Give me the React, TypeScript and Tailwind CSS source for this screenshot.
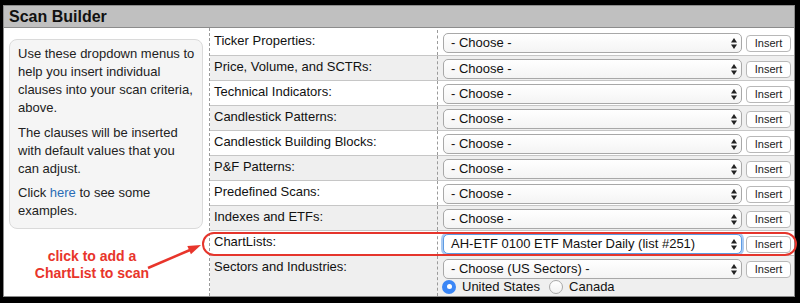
import React from "react";

const rows = [
  "Ticker Properties:",
  "Price, Volume, and SCTRs:",
  "Technical Indicators:",
  "Candlestick Patterns:",
  "Candlestick Building Blocks:",
  "P&F Patterns:",
  "Predefined Scans:",
  "Indexes and ETFs:",
  "ChartLists:",
  "Sectors and Industries:",
];

function Arrows() {
  return (
    <svg width="6" height="11" viewBox="0 0 6 11" className="shrink-0">
      <path d="M0 4.5 L3 0 L6 4.5 Z" fill="#222" />
      <path d="M0 6.5 L3 11 L6 6.5 Z" fill="#222" />
    </svg>
  );
}

function Select({ text, focus }: { text: string; focus?: boolean }) {
  return (
    <div
      className={
        focus
          ? "w-[299px] h-[20px] rounded-[5px] border border-[#5d9be3] shadow-[0_0_0_2px_#a9caf2] bg-white flex items-center pl-[7px] pr-[4px]"
          : "w-[299px] h-[20px] rounded-[5px] border border-[#a8a8a8] bg-gradient-to-b from-white to-[#f4f4f4] flex items-center pl-[7px] pr-[4px]"
      }
    >
      <span className="flex-1 text-[13px] leading-[16px] text-[#111] whitespace-nowrap">{text}</span>
      <Arrows />
    </div>
  );
}

function InsertBtn() {
  return (
    <div className="w-[45px] h-[17px] ml-[4px] rounded-[4px] border border-[#b8b8b8] bg-white flex items-center justify-center text-[11px] text-[#222]">
      Insert
    </div>
  );
}

function Radio({ checked, label }: { checked?: boolean; label: string }) {
  return (
    <div className="flex items-center">
      {checked ? (
        <div className="w-[14px] h-[14px] rounded-full bg-[#3a86f6] flex items-center justify-center">
          <div className="w-[5px] h-[5px] rounded-full bg-white" />
        </div>
      ) : (
        <div className="w-[14px] h-[14px] rounded-full border border-[#a9a9a9] bg-gradient-to-b from-white to-[#f2f2f2]" />
      )}
      <span className="ml-[6px] text-[13px] leading-[15px] text-[#111]">{label}</span>
    </div>
  );
}

export default function App() {
  return (
    <div className="relative w-[800px] h-[303px] bg-black pt-[5px] pl-[3px] pr-[5px] pb-[6px] font-['Liberation_Sans',Arial,sans-serif]">
      <div className="h-full border border-[#8c8c8c] bg-white flex flex-col">
        <div className="h-[22px] shrink-0 bg-[#c0c0c0] border-b border-[#8c8c8c] pl-[5px] text-[16px] font-bold leading-[21px] text-[#111]">
          Scan Builder
        </div>
        <div className="flex flex-1">
          {/* left help column */}
          <div className="w-[205px] shrink-0 pt-[11px] pl-[5px]">
            <div className="w-[194px] rounded-[8px] border border-[#dadada] bg-[#f5f5f5] pt-[5px] pb-[8px] pl-[8px] pr-[4px] text-[13px] leading-[18px] text-[#222] whitespace-nowrap">
              <p>
                Use these dropdown menus to<br />help you insert individual<br />clauses into your scan criteria,<br />above.
              </p>
              <p className="mt-[7px]">
                The clauses will be inserted<br />with default values that you<br />can adjust.
              </p>
              <p className="mt-[6px]">
                Click <span className="text-[#2a6cb5]">here</span> to see some<br />examples.
              </p>
            </div>
            <div className="w-[166px] mt-[19px] text-center text-[14px] leading-[17px] font-bold text-[#e8352b]">
              click to add a<br />ChartList to scan
            </div>
          </div>

          {/* criteria table */}
          <div className="flex-1 flex flex-col border-l border-dashed border-[#9a9a9a]">
            {rows.map((label, i) => {
              const gray = i % 2 === 1;
              const first = i === 0;
              const last = i === rows.length - 1;
              return (
                <div
                  key={label}
                  className={
                    (gray ? "bg-[#efefef] " : "bg-white ") +
                    (first ? "h-[27px] pt-[2px] " : "border-t border-[#c6c6c6] ") +
                    (last ? "flex-1 " : first ? "" : "h-[25px] ") +
                    "flex shrink-0"
                  }
                >
                  <div className="w-[227px] shrink-0 pl-[4px] pt-[3px] text-[13px] leading-[16px] text-[#111]">
                    {label}
                  </div>
                  <div className="flex-1 border-l border-dashed border-[#9a9a9a] pl-[5px] pt-[3px]">
                    <div className="flex items-center">
                      <Select
                        text={
                          i === 8
                            ? "AH-ETF 0100 ETF Master Daily (list #251)"
                            : last
                            ? "- Choose (US Sectors) -"
                            : "- Choose -"
                        }
                        focus={i === 8}
                      />
                      <InsertBtn />
                    </div>
                    {last && (
                      <div className="flex items-center gap-[9px] -ml-[1px]">
                        <Radio checked label="United States" />
                        <Radio label="Canada" />
                      </div>
                    )}
                  </div>
                </div>
              );
            })}
          </div>
        </div>
      </div>

      {/* annotation overlays */}
      <div className="absolute left-[202px] top-[232px] w-[595px] h-[24px] rounded-[12px] border-2 border-[#e5352c]" />
      <svg className="absolute left-[140px] top-[235px]" width="70" height="45" viewBox="0 0 70 45">
        <line x1="8" y1="33" x2="50" y2="15" stroke="#e8352b" strokeWidth="2.5" />
        <polygon points="61,10 50.9,19.3 47.3,11" fill="#e8352b" />
      </svg>
    </div>
  );
}
